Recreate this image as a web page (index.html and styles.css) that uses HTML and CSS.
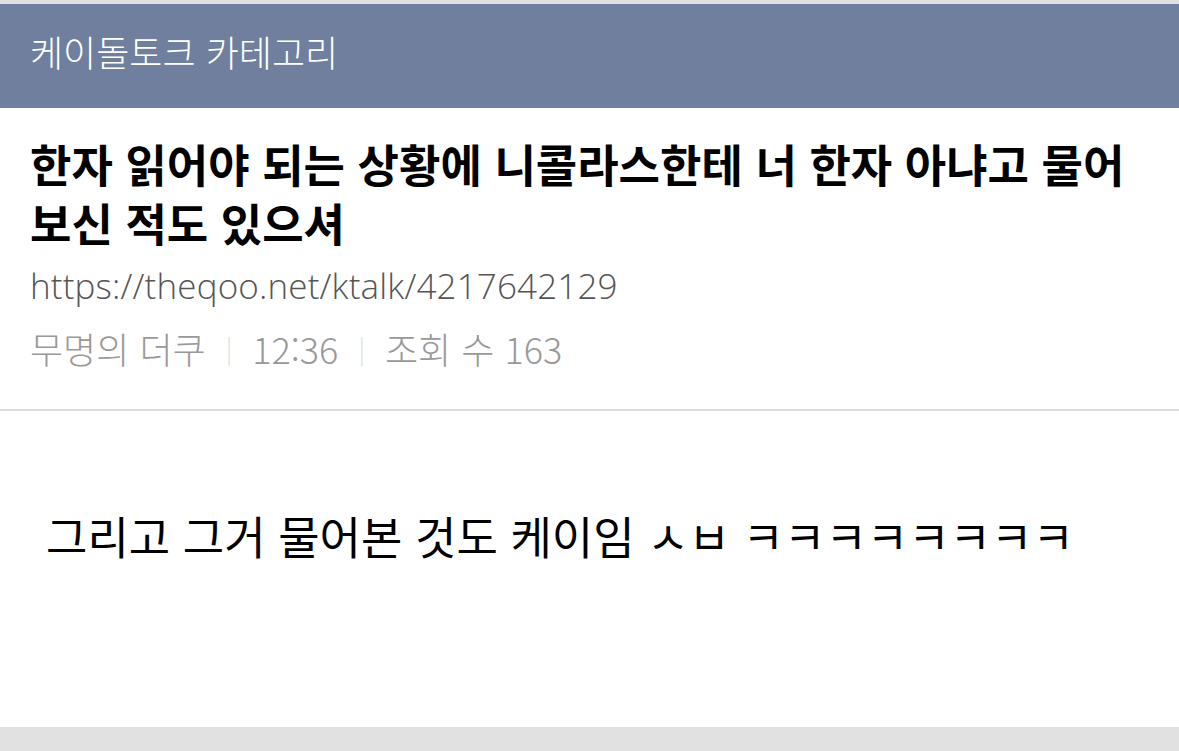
FILE: index.html
```html
<!DOCTYPE html>
<html lang="ko">
<head>
    <meta charset="UTF-8">
    <meta name="viewport" content="width=device-width, initial-scale=1.0">
    <title>케이돌토크 카테고리</title>
    <link rel="stylesheet" href="styles.css">
</head>
<body>
    <div class="page">
        <div class="top-strip"></div>
        <div class="category-bar">케이돌토크 카테고리</div>

        <div class="post-head">
            <h1 class="post-title">한자 읽어야 되는 상황에 니콜라스한테 너 한자 아냐고 물어 보신 적도 있으셔</h1>
            <div class="post-url">https://theqoo.net/ktalk/4217642129</div>
            <div class="post-meta">
                <span>무명의 더쿠</span>
                <span class="sep">|</span>
                <span>12:36</span>
                <span class="sep">|</span>
                <span>조회 수 163</span>
            </div>
        </div>

        <div class="post-body">
            <p>그리고 그거 물어본 것도 케이임 ㅅㅂ ㅋㅋㅋㅋㅋㅋㅋㅋ</p>
        </div>

        <div class="bottom-strip"></div>
    </div>
</body>
</html>
```

FILE: styles.css
```css
body {
    margin: 0;
    background-color: #fff;
    font-family: "Noto Sans CJK KR", "Noto Sans", sans-serif;
    color: #000;
}
.page {
    display: flex;
    flex-direction: column;
    min-height: 751px;
}
.top-strip {
    height: 4px;
    background-color: #e0e0e0;
}
.category-bar {
    height: 104px;
    box-sizing: border-box;
    padding: 0 0 10px 30px;
    display: flex;
    align-items: center;
    background-color: #6f7f9d;
    color: #fff;
    font-size: 36px;
    font-weight: 300;
}
.post-head {
    padding: 26px 30px 0 30px;
    border-bottom: 2px solid #dddddd;
    height: 303px;
    box-sizing: border-box;
}
.post-title {
    margin: 0;
    font-size: 45px;
    font-weight: 700;
    line-height: 59px;
}
.post-url {
    margin-top: 12px;
    font-size: 35px;
    line-height: 44px;
    letter-spacing: 0.15px;
    color: #555;
    font-family: "Open Sans", "Noto Sans CJK KR", sans-serif;
    font-weight: 300;
}
.post-meta {
    margin-top: 18px;
    display: flex;
    align-items: center;
    gap: 20px;
    font-size: 36px;
    line-height: 44px;
    color: #999;
    font-weight: 300;
}
.post-meta .sep {
    color: #ddd;
    font-size: 26px;
}
.post-body {
    flex: 1;
    padding: 0 46px;
}
.post-body p {
    margin: 97px 0 0 0;
    font-size: 45px;
    line-height: 56px;
    font-weight: 400;
}
.bottom-strip {
    height: 24px;
    background-color: #e1e1e1;
}
```
